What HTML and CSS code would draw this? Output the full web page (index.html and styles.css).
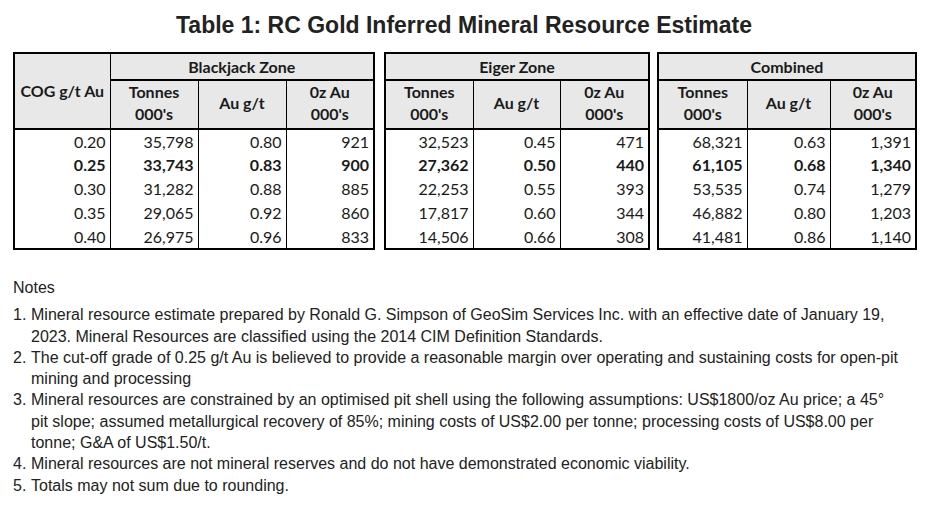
FILE: index.html
```html
<!DOCTYPE html>
<html>
<head>
<meta charset="utf-8">
<link rel="stylesheet" href="styles.css">
</head>
<body>
<h1 class="title">Table 1: RC Gold Inferred Mineral Resource Estimate</h1>
<div class="tables">
  <table class="res res-bj">
    <colgroup><col class="c-cog"><col class="c-96"><col class="c-88"><col class="c-88"></colgroup>
    <thead>
      <tr><th rowspan="2" class="cog">COG g/t Au</th><th colspan="3" class="zone">Blackjack Zone</th></tr>
      <tr><th>Tonnes<br>000's</th><th>Au g/t</th><th>0z Au<br>000's</th></tr>
    </thead>
    <tbody>
      <tr><td>0.20</td><td>35,798</td><td>0.80</td><td>921</td></tr>
      <tr class="b"><td>0.25</td><td>33,743</td><td>0.83</td><td>900</td></tr>
      <tr><td>0.30</td><td>31,282</td><td>0.88</td><td>885</td></tr>
      <tr><td>0.35</td><td>29,065</td><td>0.92</td><td>860</td></tr>
      <tr><td>0.40</td><td>26,975</td><td>0.96</td><td>833</td></tr>
    </tbody>
  </table>
  <table class="res res-eg">
    <colgroup><col class="c-e1"><col class="c-e2"><col class="c-e3"></colgroup>
    <thead>
      <tr><th colspan="3" class="zone">Eiger Zone</th></tr>
      <tr><th>Tonnes<br>000's</th><th>Au g/t</th><th>0z Au<br>000's</th></tr>
    </thead>
    <tbody>
      <tr><td>32,523</td><td>0.45</td><td>471</td></tr>
      <tr class="b"><td>27,362</td><td>0.50</td><td>440</td></tr>
      <tr><td>22,253</td><td>0.55</td><td>393</td></tr>
      <tr><td>17,817</td><td>0.60</td><td>344</td></tr>
      <tr><td>14,506</td><td>0.66</td><td>308</td></tr>
    </tbody>
  </table>
  <table class="res res-cb">
    <colgroup><col class="c-k1"><col class="c-k2"><col class="c-k3"></colgroup>
    <thead>
      <tr><th colspan="3" class="zone">Combined</th></tr>
      <tr><th>Tonnes<br>000's</th><th>Au g/t</th><th>0z Au<br>000's</th></tr>
    </thead>
    <tbody>
      <tr><td>68,321</td><td>0.63</td><td>1,391</td></tr>
      <tr class="b"><td>61,105</td><td>0.68</td><td>1,340</td></tr>
      <tr><td>53,535</td><td>0.74</td><td>1,279</td></tr>
      <tr><td>46,882</td><td>0.80</td><td>1,203</td></tr>
      <tr><td>41,481</td><td>0.86</td><td>1,140</td></tr>
    </tbody>
  </table>
</div>
<div class="notes">
  <p class="notes-head">Notes</p>
  <div class="note"><span class="num">1.</span><span class="txt">Mineral resource estimate prepared by Ronald G. Simpson of GeoSim Services Inc. with an effective date of January 19, 2023. Mineral Resources are classified using the 2014 CIM Definition Standards.</span></div>
  <div class="note"><span class="num">2.</span><span class="txt">The cut-off grade of 0.25 g/t Au is believed to provide a reasonable margin over operating and sustaining costs for open-pit mining and processing</span></div>
  <div class="note"><span class="num">3.</span><span class="txt">Mineral resources are constrained by an optimised pit shell using the following assumptions: US$1800/oz Au price; a 45° pit slope; assumed metallurgical recovery of 85%; mining costs of US$2.00 per tonne; processing costs of US$8.00 per tonne; G&amp;A of US$1.50/t.</span></div>
  <div class="note"><span class="num">4.</span><span class="txt">Mineral resources are not mineral reserves and do not have demonstrated economic viability.</span></div>
  <div class="note"><span class="num">5.</span><span class="txt">Totals may not sum due to rounding.</span></div>
</div>
</body>
</html>
```
FILE: styles.css
```css
* { box-sizing: border-box; }
body {
  margin: 0;
  background: #ffffff;
  color: #1e1e1e;
  width: 928px;
}
.title {
  margin: 0;
  padding-top: 12px;
  height: 52px;
  text-align: center;
  font-family: "Liberation Sans", Arial, sans-serif;
  font-weight: bold;
  font-size: 23px;
  line-height: 26px;
  color: #222;
}
.tables {
  display: flex;
  align-items: flex-start;
  padding-left: 13px;
}
.res {
  border-collapse: collapse;
  table-layout: fixed;
  border: 2px solid #000;
  font-family: Lato, "Open Sans", sans-serif;
  font-size: 16px;
  color: #1a1a1a;
}
.res-bj { width: 360px; }
.res-eg { width: 264px; margin-left: 9px; }
.res-cb { width: 258px; margin-left: 7px; }
.c-cog { width: 96px; }
.c-96 { width: 88px; }
.c-88 { width: 88px; }
.c-e1 { width: 88px; }
.c-e2 { width: 87px; }
.c-e3 { width: 89px; }
.c-k1 { width: 89px; }
.c-k2 { width: 83px; }
.c-k3 { width: 86px; }
.res th {
  background: #e8e8e8;
  font-weight: bold;
  text-align: center;
  line-height: 22px;
  padding: 0 0 3px;
  border-left: 1px solid #000;
  border-right: 1px solid #000;
  border-bottom: 2px solid #000;
  height: 42px;
  vertical-align: middle;
}
.res th.zone {
  height: 27px;
  line-height: 24px;
  padding: 0;
  border-bottom: 2px solid #000;
}
.res th.cog {
  height: 69px;
  padding: 0;
}
.res td {
  text-align: right;
  padding: 0 4px 0 0;
  height: 24px;
  line-height: 22px;
  border-left: 1px solid #000;
  border-right: 1px solid #000;
  vertical-align: middle;
}
.res tr.b td { font-weight: bold; }
.notes {
  padding: 27px 0 0 13px;
  width: 902px;
  font-family: "Liberation Sans", Arial, sans-serif;
  font-size: 16px;
  line-height: 21.3px;
  color: #222;
}
.notes-head {
  margin: 0 0 6px;
}
.note {
  display: flex;
}
.num {
  width: 18px;
  flex: none;
}
.txt {
  flex: 1;
}
```
